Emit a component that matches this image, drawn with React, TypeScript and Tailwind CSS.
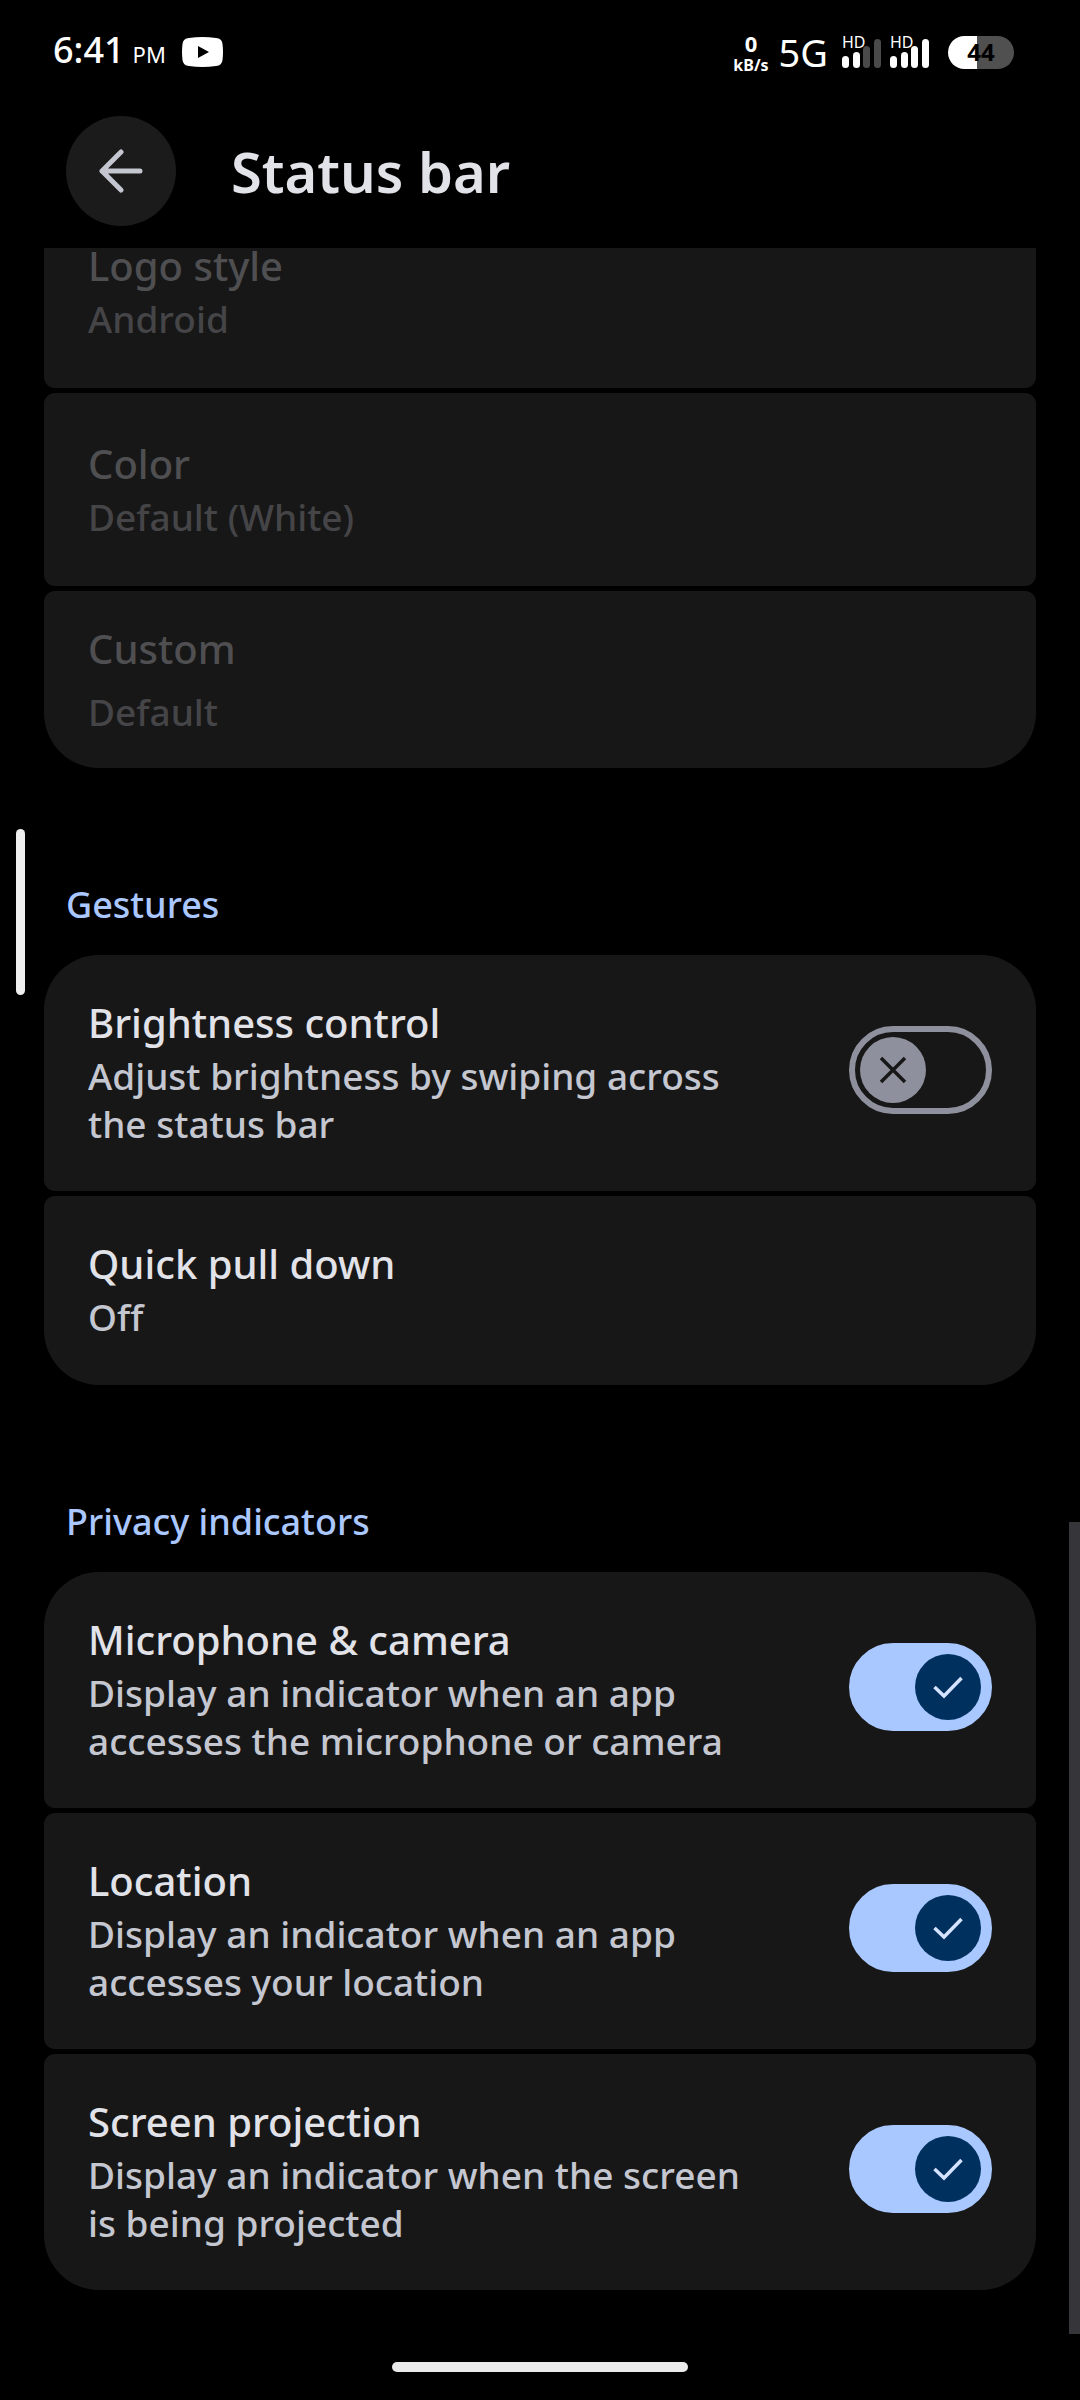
import React, { useState } from 'react';

type RowProps = {
  title: string,
  desc: string,
  disabled?: boolean,
  spaced?: boolean,
}

type SwitchRowProps = {
  id: string,
  title: string,
  desc: string,
  defaultOn?: boolean,
}

const rowBase = 'w-full bg-[#171717] px-11 text-left rounded-[11px]';

const SignalBars = ({ level }: { level: number }) => {
  const bars = [
    { x: 0, h: 12 },
    { x: 11, h: 16 },
    { x: 21, h: 22 },
    { x: 32, h: 29 },
  ];

  return (
    <span className="grid w-10 h-8">
      <svg viewBox="0 0 40 32" className="col-start-1 row-start-1 w-10 h-8">
        {bars.map((bar, idx) => (
          <rect key={bar.x} x={bar.x} y={32 - bar.h} width="7" height={bar.h} rx="3.5" fill={idx < level ? '#fff' : '#4a4a4a'} />
        ))}
      </svg>
      <span className="col-start-1 row-start-1 text-base leading-3">HD</span>
    </span>
  );
}

const StatusIcons = () => (
  <div className="flex items-center justify-between h-[104px] pl-[53px] pr-[66px] text-white">
    <div className="flex items-center">
      <div className="flex items-baseline gap-2">
        <span className="text-[36px] leading-10 font-medium">6:41</span>
        <span className="text-[22px] leading-10">PM</span>
      </div>
      <svg viewBox="0 0 41 30" className="ml-4 w-[41px] h-[30px]">
        <path d="M7 1Q20.500-1 34 1Q40 1.500 40.500 7Q41.500 15 40.500 23Q40 28.500 34 29Q20.500 31 7 29Q1 28.500 .5 23Q-.5 15 .5 7Q1 1.500 7 1Z" fill="#fff" />
        <path d="M16 9V21L27 15Z" fill="#000" />
      </svg>
    </div>
    <div className="flex items-center">
      <div className="flex flex-col items-center gap-0.5 font-bold">
        <span className="text-[22px] leading-6">0</span>
        <span className="text-base leading-4">kB/s</span>
      </div>
      <span className="ml-[10px] text-[38px] leading-10">5G</span>
      <div className="flex gap-2 ml-[14px]">
        <SignalBars level={2} />
        <SignalBars level={4} />
      </div>
      <span className="flex items-center justify-center ml-[18px] w-[66px] h-[33px] rounded-full bg-[linear-gradient(to_right,#fff_44%,#505050_44%)] text-[24px] leading-8 font-bold text-black">
        44
      </span>
    </div>
  </div>
);

const RowText = ({ title, desc, disabled, spaced }: RowProps) => (
  <span className={`flex flex-col min-w-0 ${spaced ? 'gap-3' : 'gap-0.5'}`}>
    <span className={`text-[40px] leading-[54px] font-medium ${disabled ? 'text-[#4f4f52]' : 'text-[#e2e2e9]'}`}>{title}</span>
    <span className={`text-[37px] leading-[48px] font-medium ${disabled ? 'text-[#454548]' : 'text-[#c4c6d0]'}`}>{desc}</span>
  </span>
);

const LinkRow = (props: RowProps) => {
  const padding = props.spaced ? 'pt-[31px] pb-8' : props.disabled ? 'pt-11 pb-[45px]' : 'pt-[41px] pb-11';

  return (
    <button type="button" disabled={props.disabled} className={`${rowBase} ${padding}`}>
      <RowText {...props} />
    </button>
  );
}

const SwitchRow = ({ id, title, desc, defaultOn = false }: SwitchRowProps) => {
  const [on, setOn] = useState(defaultOn);

  return (
    <label htmlFor={id} className={`${rowBase} flex items-center justify-between gap-[88px] pt-[41px] pb-[43px]`}>
      <RowText title={title} desc={desc} />
      <span className="grid shrink-0 items-center pb-1">
        <input
          id={id}
          type="checkbox"
          role="switch"
          checked={on}
          onChange={() => setOn(!on)}
          className="col-start-1 row-start-1 appearance-none w-[143px] h-[88px] rounded-full border-[6px] border-[#8e919d] checked:border-[#a8c8ff] checked:bg-[#a8c8ff]"
        />
        <svg
          viewBox="0 0 66 66"
          fill="none"
          className={`pointer-events-none col-start-1 row-start-1 w-[66px] h-[66px] mx-[11px] ${on ? 'justify-self-end' : 'justify-self-start'}`}
        >
          <circle cx="33" cy="33" r="33" fill={on ? '#00315e' : '#8e919d'} />
          {on ? (
            <path d="M19.500 33L29 42L46.500 24" stroke="#d6e3ff" strokeWidth="3.5" />
          ) : (
            <path d="M21 21L45 45M45 21L21 45" stroke="#171717" strokeWidth="3.5" />
          )}
        </svg>
      </span>
    </label>
  );
}

const Section = ({ title, children }: { title: string, children: React.ReactNode }) => (
  <section>
    <h2 className="mt-[117px] mb-[30px] pl-[22px] text-[36px] leading-10 font-medium text-[#aac7ff]">{title}</h2>
    <div className="flex flex-col gap-[5px] overflow-hidden rounded-[55px]">{children}</div>
  </section>
);

const App = () => {
  return (
    <div className="relative min-h-screen overflow-hidden bg-black font-['Noto_Sans',sans-serif]">
      <StatusIcons />

      <header className="flex items-center gap-[55px] pt-3 pb-[22px] pl-[66px] pr-11">
        <button type="button" aria-label="Back" className="flex items-center justify-center w-[110px] h-[110px] rounded-full bg-[#1b1b1b]">
          <svg viewBox="0 0 44 44" fill="none" className="w-11 h-11" stroke="#c4c6d0" strokeWidth="5" strokeLinecap="round" strokeLinejoin="round">
            <path d="M22 3L3 22L22 41M3 22H41" />
          </svg>
        </button>
        <h1 className="text-[56px] leading-[72px] font-semibold text-[#e2e2e9]">Status bar</h1>
      </header>

      <main className="overflow-hidden px-11 pb-[110px]">
        {/* scrolled part of the logo group */}
        <div className="flex flex-col gap-[5px] -mt-[53px] overflow-hidden rounded-b-[55px]">
          <LinkRow title="Logo style" desc="Android" disabled />
          <LinkRow title="Color" desc="Default (White)" disabled />
          <LinkRow title="Custom" desc="Default" disabled spaced />
        </div>

        <Section title="Gestures">
          <SwitchRow id="brightness" title="Brightness control" desc="Adjust brightness by swiping across the status bar" />
          <LinkRow title="Quick pull down" desc="Off" />
        </Section>

        <Section title="Privacy indicators">
          <SwitchRow id="mic" title="Microphone & camera" desc="Display an indicator when an app accesses the microphone or camera" defaultOn />
          <SwitchRow id="location" title="Location" desc="Display an indicator when an app accesses your location" defaultOn />
          <SwitchRow id="projection" title="Screen projection" desc="Display an indicator when the screen is being projected" defaultOn />
        </Section>
      </main>

      {/* edge handle, scroll thumb, home indicator */}
      <div className="absolute left-4 top-[829px] w-[9px] h-[166px] rounded-full bg-[#efefef]" />
      <div className="absolute right-0 top-[1522px] w-[11px] h-[812px] bg-[#35353a]" />
      <div className="absolute bottom-7 left-1/2 -translate-x-1/2 w-[296px] h-[10px] rounded-full bg-[#ebebeb]" />
    </div>
  )
}

export default App
